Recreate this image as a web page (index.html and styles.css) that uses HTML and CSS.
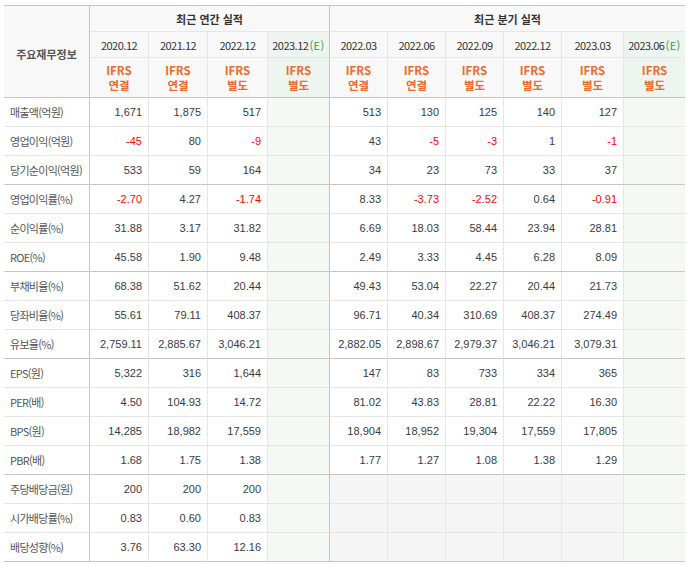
FILE: index.html
```html
<!DOCTYPE html>
<html lang="ko">
<head>
<meta charset="utf-8">
<title>주요재무정보</title>
<link rel="stylesheet" href="styles.css">
</head>
<body>
<table class="fin">
  <colgroup>
    <col class="c-label">
    <col class="c59"><col class="c59"><col class="c60"><col class="c62">
    <col class="c58"><col class="c58"><col class="c58"><col class="c58"><col class="c62"><col class="c61">
  </colgroup>
  <thead>
    <tr class="h1">
      <th rowspan="3" class="corner">주요재무정보</th>
      <th colspan="4" class="group div">최근 연간 실적</th>
      <th colspan="6" class="group last">최근 분기 실적</th>
    </tr>
    <tr class="h2">
      <th class="date">2020.12</th>
      <th class="date">2021.12</th>
      <th class="date">2022.12</th>
      <th class="date e div">2023.12<span class="est">(E)</span></th>
      <th class="date">2022.03</th>
      <th class="date">2022.06</th>
      <th class="date">2022.09</th>
      <th class="date">2022.12</th>
      <th class="date">2023.03</th>
      <th class="date e last">2023.06<span class="est">(E)</span></th>
    </tr>
    <tr class="h3">
      <th class="ifrs">IFRS<br>연결</th>
      <th class="ifrs">IFRS<br>연결</th>
      <th class="ifrs">IFRS<br>별도</th>
      <th class="ifrs e div">IFRS<br>별도</th>
      <th class="ifrs">IFRS<br>연결</th>
      <th class="ifrs">IFRS<br>연결</th>
      <th class="ifrs">IFRS<br>별도</th>
      <th class="ifrs">IFRS<br>별도</th>
      <th class="ifrs">IFRS<br>별도</th>
      <th class="ifrs e last">IFRS<br>별도</th>
    </tr>
  </thead>
  <tbody>
    <tr>
      <th class="label">매출액(억원)</th>
      <td>1,671</td><td>1,875</td><td>517</td><td class="e div"></td>
      <td>513</td><td>130</td><td>125</td><td>140</td><td>127</td><td class="e last"></td>
    </tr>
    <tr>
      <th class="label">영업이익(억원)</th>
      <td class="neg">-45</td><td>80</td><td class="neg">-9</td><td class="e div"></td>
      <td>43</td><td class="neg">-5</td><td class="neg">-3</td><td>1</td><td class="neg">-1</td><td class="e last"></td>
    </tr>
    <tr class="grp-end">
      <th class="label">당기순이익(억원)</th>
      <td>533</td><td>59</td><td>164</td><td class="e div"></td>
      <td>34</td><td>23</td><td>73</td><td>33</td><td>37</td><td class="e last"></td>
    </tr>
    <tr>
      <th class="label">영업이익률(%)</th>
      <td class="neg">-2.70</td><td>4.27</td><td class="neg">-1.74</td><td class="e div"></td>
      <td>8.33</td><td class="neg">-3.73</td><td class="neg">-2.52</td><td>0.64</td><td class="neg">-0.91</td><td class="e last"></td>
    </tr>
    <tr>
      <th class="label">순이익률(%)</th>
      <td>31.88</td><td>3.17</td><td>31.82</td><td class="e div"></td>
      <td>6.69</td><td>18.03</td><td>58.44</td><td>23.94</td><td>28.81</td><td class="e last"></td>
    </tr>
    <tr class="grp-end">
      <th class="label">ROE(%)</th>
      <td>45.58</td><td>1.90</td><td>9.48</td><td class="e div"></td>
      <td>2.49</td><td>3.33</td><td>4.45</td><td>6.28</td><td>8.09</td><td class="e last"></td>
    </tr>
    <tr>
      <th class="label">부채비율(%)</th>
      <td>68.38</td><td>51.62</td><td>20.44</td><td class="e div"></td>
      <td>49.43</td><td>53.04</td><td>22.27</td><td>20.44</td><td>21.73</td><td class="e last"></td>
    </tr>
    <tr>
      <th class="label">당좌비율(%)</th>
      <td>55.61</td><td>79.11</td><td>408.37</td><td class="e div"></td>
      <td>96.71</td><td>40.34</td><td>310.69</td><td>408.37</td><td>274.49</td><td class="e last"></td>
    </tr>
    <tr class="grp-end">
      <th class="label">유보율(%)</th>
      <td>2,759.11</td><td>2,885.67</td><td>3,046.21</td><td class="e div"></td>
      <td>2,882.05</td><td>2,898.67</td><td>2,979.37</td><td>3,046.21</td><td>3,079.31</td><td class="e last"></td>
    </tr>
    <tr>
      <th class="label">EPS(원)</th>
      <td>5,322</td><td>316</td><td>1,644</td><td class="e div"></td>
      <td>147</td><td>83</td><td>733</td><td>334</td><td>365</td><td class="e last"></td>
    </tr>
    <tr>
      <th class="label">PER(배)</th>
      <td>4.50</td><td>104.93</td><td>14.72</td><td class="e div"></td>
      <td>81.02</td><td>43.83</td><td>28.81</td><td>22.22</td><td>16.30</td><td class="e last"></td>
    </tr>
    <tr>
      <th class="label">BPS(원)</th>
      <td>14,285</td><td>18,982</td><td>17,559</td><td class="e div"></td>
      <td>18,904</td><td>18,952</td><td>19,304</td><td>17,559</td><td>17,805</td><td class="e last"></td>
    </tr>
    <tr class="grp-end">
      <th class="label">PBR(배)</th>
      <td>1.68</td><td>1.75</td><td>1.38</td><td class="e div"></td>
      <td>1.77</td><td>1.27</td><td>1.08</td><td>1.38</td><td>1.29</td><td class="e last"></td>
    </tr>
    <tr>
      <th class="label">주당배당금(원)</th>
      <td>200</td><td>200</td><td>200</td><td class="e div"></td>
      <td class="na"></td><td class="na"></td><td class="na"></td><td class="na"></td><td class="na"></td><td class="e last"></td>
    </tr>
    <tr>
      <th class="label">시가배당률(%)</th>
      <td>0.83</td><td>0.60</td><td>0.83</td><td class="e div"></td>
      <td class="na"></td><td class="na"></td><td class="na"></td><td class="na"></td><td class="na"></td><td class="e last"></td>
    </tr>
    <tr class="grp-end">
      <th class="label">배당성향(%)</th>
      <td>3.76</td><td>63.30</td><td>12.16</td><td class="e div"></td>
      <td class="na"></td><td class="na"></td><td class="na"></td><td class="na"></td><td class="na"></td><td class="e last"></td>
    </tr>
  </tbody>
</table>
</body>
</html>
```

FILE: styles.css
```css
html, body {
  margin: 0;
  padding: 0;
  background: #ffffff;
}

body {
  padding: 5px 0 0 4px;
}

.fin {
  border-collapse: separate;
  border-spacing: 0;
  table-layout: fixed;
  width: 681px;
  border-top: 1px solid #c6c6c6;
  font-family: "Liberation Sans", Arial, sans-serif;
  font-size: 11px;
  color: #333333;
}

.c-label { width: 86px; }
.c58 { width: 58px; }
.c59 { width: 59px; }
.c60 { width: 60px; }
.c61 { width: 61px; }
.c62 { width: 62px; }

.fin th,
.fin td {
  box-sizing: border-box;
  padding: 0;
  border: 0;
  border-right: 1px solid #e6e6e6;
  border-bottom: 1px solid #e6e6e6;
  vertical-align: middle;
  white-space: nowrap;
}

.fin .last {
  border-right: 0;
}

.fin .div {
  border-right: 1px solid #c6c6c6;
}

/* header */
.fin thead th {
  background: #f8f8f8;
  font-weight: normal;
  text-align: center;
  font-family: "Noto Sans CJK KR", "Noto Sans", sans-serif;
}

.fin .h1 th { height: 26px; }
.fin .h2 th { height: 26px; }
.fin .h3 th {
  height: 40px;
  border-bottom-color: #c6c6c6;
}

.fin thead .corner {
  border-right: 1px solid #c6c6c6;
  border-bottom-color: #c6c6c6;
  color: #555555;
  font-size: 11px;
  font-weight: bold;
  padding-top: 4px;
}

.fin thead .group {
  font-size: 11px;
  font-weight: bold;
  color: #333333;
  padding-top: 1px;
}

.fin thead .date {
  font-size: 11px;
  color: #333333;
  letter-spacing: -0.5px;
}

.est {
  color: #2f9a55;
  letter-spacing: 0.5px;
  padding-left: 1px;
}

.fin thead .ifrs {
  color: #ee6a2c;
  font-weight: bold;
  font-size: 11.5px;
  line-height: 15px;
}

.fin thead th.e {
  background: #eef5f0;
}

/* body */
.fin tbody tr { height: 29px; }

.fin tbody th.label {
  height: 29px;
  text-align: left;
  font-weight: normal;
  font-family: "Noto Sans CJK KR", "Noto Sans", sans-serif;
  font-size: 11px;
  color: #555555;
  padding-left: 6px;
  border-right: 1px solid #c6c6c6;
  letter-spacing: -0.7px;
}

.fin tbody td {
  height: 29px;
  text-align: right;
  padding-right: 6px;
  color: #3a3a44;
}

.fin tbody td.neg {
  color: #ff0000;
}

.fin tbody td.e {
  background: #f4f9f5;
}

.fin tbody td.na {
  background: #f5f5f5;
}

.fin tbody tr.grp-end th,
.fin tbody tr.grp-end td {
  border-bottom-color: #c6c6c6;
}
```
